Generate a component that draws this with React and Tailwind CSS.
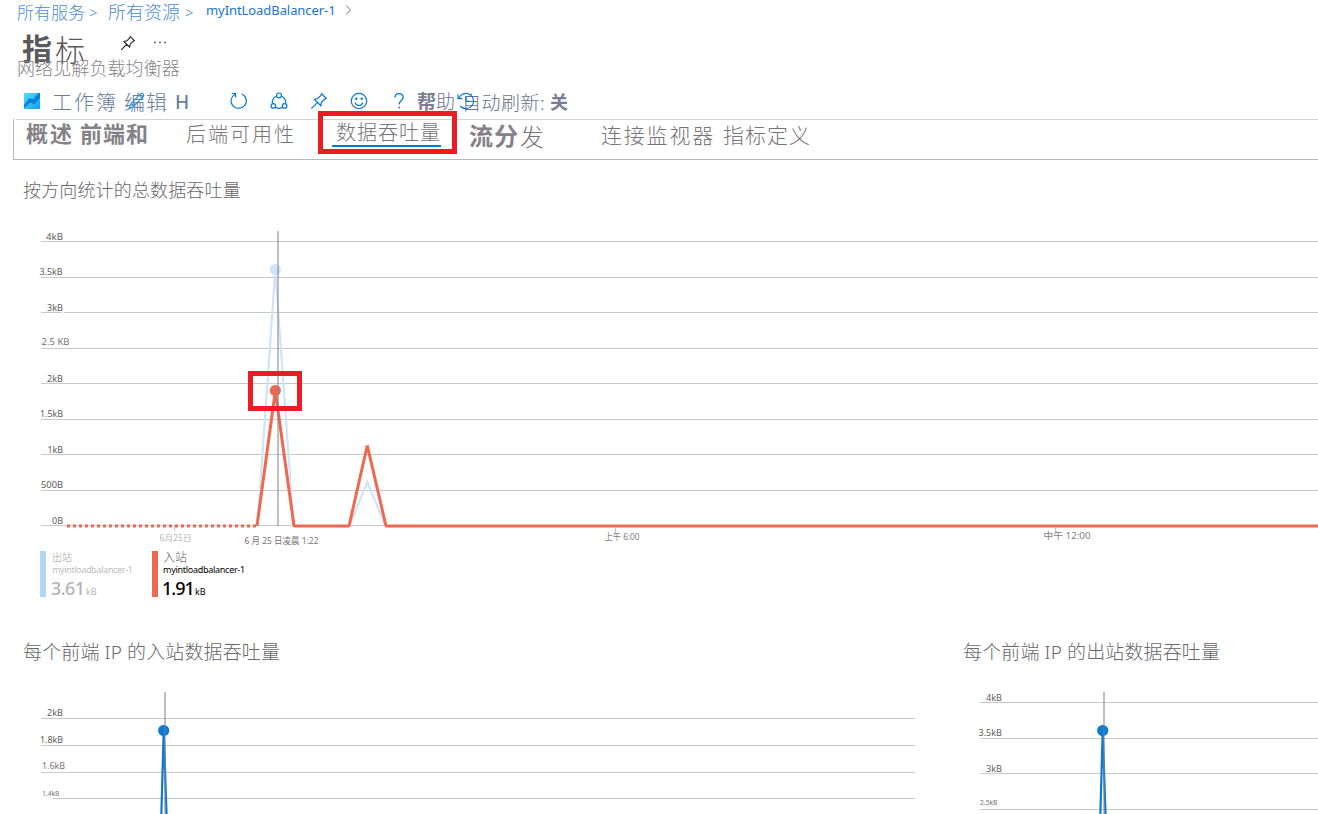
const FONT = "font-['Noto_Sans','Noto_Sans_CJK_SC',sans-serif]";

function Label({ x, y, w, size = 9, fill = '#5c5a5e', children }) {
  return (
    <text x={x} y={y} fontSize={size} fill={fill} textLength={w} lengthAdjust="spacingAndGlyphs">
      {children}
    </text>
  );
}

function Pin({ className }) {
  return (
    <svg viewBox="0 0 16 16" className={className} fill="none" stroke="currentColor" strokeWidth="1.1">
      <path d="M10.3 1.6 14.4 5.7 13 6.4 10.2 9.2 9.6 12.2 3.9 6.5 6.9 5.8 9.7 3ZM6.6 9.4 1.2 14.8" />
    </svg>
  );
}

function Chevron() {
  return (
    <svg viewBox="0 0 7 12" className="h-3 w-[7px]" fill="none" stroke="#767676" strokeWidth="1">
      <path d="M1 1.5 5.5 6 1 10.5" />
    </svg>
  );
}

function Breadcrumb() {
  return (
    <nav className="flex h-6 items-start whitespace-nowrap pl-[17px] font-light text-[#4a8ccb]">
      <span className="w-[72px] text-[17px] leading-[25px]">所有服务</span>
      <span className="w-[19px] text-[15px] leading-[25px]">&gt;</span>
      <span className="w-[77px] text-[18px] leading-[25px]">所有资源</span>
      <span className="w-[21px] text-[15px] leading-[25px]">&gt;</span>
      <span className="w-[139px] text-[13px] font-normal leading-[21px] tracking-[-0.07px] text-[#1874cd]">myIntLoadBalancer-1</span>
      <span className="pt-1"><Chevron /></span>
    </nav>
  );
}

function Title() {
  return (
    <header className="h-[61px] whitespace-nowrap">
      <div className="flex h-[34px] items-start pl-[22px] text-[#5b595c]">
        <span className="w-[33px] text-[30px] font-bold leading-[49px]">指</span>
        <span className="w-[65px] text-[30px] font-light leading-[52px]">标</span>
        <Pin className="mt-[11px] size-4 text-[#222]" />
        <svg viewBox="0 0 12 3" className="ml-[18px] mt-[17px] h-[3px] w-3" fill="#555">
          <circle cx="1" cy="1.5" r="0.9" /><circle cx="6" cy="1.5" r="0.9" /><circle cx="11" cy="1.5" r="0.9" />
        </svg>
      </div>
      <p className="pl-[17px] text-[18px] font-light leading-[20px] tracking-[0.1px] text-[#858287]">网络见解负载均衡器</p>
    </header>
  );
}

function Toolbar() {
  return (
    <div className="flex h-[34px] items-start whitespace-nowrap pl-6 text-[#6b7f9e]">
      <svg viewBox="0 0 16 16" className="mt-2 size-4">
        <defs>
          <linearGradient id="wb" x1="0" y1="0" x2="1" y2="1">
            <stop stopColor="#4fe0fc" /><stop offset="1" stopColor="#12a0ee" />
          </linearGradient>
        </defs>
        <rect width="16" height="16" rx="0.6" fill="url(#wb)" />
        <path d="M0 12 5.5 5 9 6.5 14.5 0H16V5L10 11.5 6.5 9.5 0 15Z" fill="#0b7fdc" />
      </svg>
      <span className="ml-[12px] w-[72px] text-[20px] font-light leading-[35px] tracking-[2px]">工作簿</span>
      <span className="relative w-[51px] text-[21px] font-light leading-[35px] tracking-[1px]">
        编辑
        <svg viewBox="0 0 18 18" className="absolute left-[4px] top-[7px] size-[18px]" fill="none" stroke="#2c8fdd" strokeWidth="1.1">
          <path d="M12.8 1.5q2-.6 2.7.7t-.4 2.4L5.8 14.2 1 16.5l2-5ZM11.5 3.2l3 2.8M3 11.5l2.8 2.7" />
        </svg>
      </span>
      <span className="w-[55px] text-[19px] font-medium leading-[34px]">H</span>
      <div className="mt-[7px] flex gap-[22px] text-[#0a78d4]">
        <svg viewBox="0 0 18 18" className="size-[18px]" fill="none" stroke="currentColor" strokeWidth="1.2">
          <path d="M5 2.2A7.6 7.6 0 1 0 12 2M1.7 1.5H5.6V5.4" />
        </svg>
        <svg viewBox="0 0 18 18" className="size-[18px]" fill="none" stroke="currentColor" strokeWidth="1.2">
          <circle cx="9" cy="3.4" r="2.4" /><circle cx="3.4" cy="13.9" r="2.3" /><circle cx="14.6" cy="13.9" r="2.3" />
          <path d="M6.7 4C3.5 5.2 2.2 8 2.3 11.6M11.3 4c3.2 1.2 4.5 4 4.4 7.6M5.5 15.2c2.2 1.4 4.8 1.4 7 0" />
        </svg>
        <Pin className="size-[18px]" />
        <svg viewBox="0 0 18 18" className="size-[18px]" fill="none" stroke="currentColor" strokeWidth="1.2">
          <circle cx="9" cy="9" r="7.7" /><path d="M5 10.5c1.6 4 6.4 4 8 0" />
          <circle cx="6.3" cy="6.8" r="0.6" fill="currentColor" /><circle cx="11.7" cy="6.8" r="0.6" fill="currentColor" />
        </svg>
        <svg viewBox="0 0 18 18" className="size-[18px]" fill="none" stroke="currentColor" strokeWidth="1.3">
          <path d="M5 5.4C5 .3 13.2.3 13.2 5.2c0 3.2-4.1 3.4-4.1 7.2M9.1 14.6v1.8" />
        </svg>
      </div>
      <span className="ml-[9px] text-[19px] font-bold leading-[35px] text-[#7a7f96]">帮</span>
      <span className="relative w-[26px] text-[19px] font-light leading-[35px] text-[#6d7289]">
        助
        <svg viewBox="0 0 18 18" className="absolute left-[21px] top-[7px] size-[18px]" fill="none" stroke="#0a78d4" strokeWidth="1.2">
          <path d="M1.8 6.5A7.6 7.6 0 1 1 3.2 14M1 2.2V6.6H5.4M9 4.5V9.3H13" />
        </svg>
      </span>
      <span className="w-[88px] text-[19px] font-light leading-[36px] tracking-[0.5px] text-[#6d7289]">自动刷新:</span>
      <span className="text-[18px] font-bold leading-[34px] text-[#7a7f96]">关</span>
    </div>
  );
}

function Tabs() {
  return (
    <div className="ml-[13px] h-[41px] border-b border-l border-[#b9b9b9] text-[#77747a]">
      <div className="ml-0.5 flex h-10 items-start whitespace-nowrap border-t border-[#d2d2d2] pl-2.5">
        <span className="w-[54px] text-[22px] font-bold leading-[27px] tracking-[2px] text-[#858287]">概述</span>
        <span className="w-[106px] text-[22px] font-bold leading-[27px] tracking-[1px] text-[#858287]">前端和</span>
        <span className="w-[132px] text-[20px] font-light leading-[29px] tracking-[2px]">后端可用性</span>
        <div className="-mt-[9px] h-[43px] w-[139px] border-[5px] border-[#ed1c24] px-[9px]">
          <div className="h-[31px] w-[109px] border-b-2 border-[#0a78d4] pl-1 text-[20px] font-light leading-[33px] tracking-[1px]">数据吞吐量</div>
        </div>
        <span className="ml-3 w-[51px] text-[24px] font-bold leading-[31px] tracking-[1px] text-[#858287]">流分</span>
        <span className="w-[81px] text-[24px] font-light leading-[34px]">发</span>
        <span className="w-[122px] text-[21px] font-light leading-[30px] tracking-[1.8px]">连接监视器</span>
        <span className="text-[21px] font-light leading-[30px] tracking-[1px]">指标定义</span>
      </div>
    </div>
  );
}

const mainTicks = [
  { t: '4kB', x: 46, w: 17, y: 241 },
  { t: '3.5kB', x: 39.5, w: 23, y: 277, dy: -1 },
  { t: '3kB', x: 47, w: 16, y: 312 },
  { t: '2.5 KB', x: 41.5, w: 28, y: 348, dy: -2, fill: '#77747a' },
  { t: '2kB', x: 47, w: 16, y: 383 },
  { t: '1.5kB', x: 40, w: 23, y: 419, dy: -1 },
  { t: '1kB', x: 47.5, w: 15.5, y: 454 },
  { t: '500B', x: 41, w: 22, y: 490, dy: -1 },
  { t: '0B', x: 52, w: 11, y: 525 },
];

function Grid({ ticks, x1, x2 }) {
  return ticks.map((k) => (
    <g key={k.t}>
      <path d={`M${k.start ?? x1} ${k.y + 0.5}H${x2}`} stroke="#c8c8c8" />
      <Label x={k.x} y={k.y - 1 + (k.dy ?? 0)} w={k.w} size={k.size} fill={k.fill}>{k.t}</Label>
    </g>
  ));
}

function MainChart() {
  return (
    <svg viewBox="0 220 1318 330" className="block h-[330px] w-[1318px]">
      <Grid ticks={mainTicks} x1={41} x2={1318} />
      <path d="M62 312.5H64" stroke="#fff" />
      <path d="M174.5 526V531M615.5 528V532M1055.5 528V531" stroke="#c0c0c0" />
      <path d="M257.5 525 275.3 270 293.5 525M350 525 367.3 482 385 525" fill="none" stroke="#cfe5f7" strokeWidth="2.2" />
      <circle cx="275.3" cy="269.5" r="5.6" fill="#cfe5f7" />
      <path d="M67 526H257" stroke="#ee6950" strokeWidth="3" strokeDasharray="3 3" />
      <path d="M257 525.8 275.3 391 294 526H349L367.3 445.5 386 526H1318" fill="none" stroke="#ee6950" strokeWidth="3" strokeLinejoin="bevel" />
      <circle cx="275.3" cy="390.5" r="5.6" fill="#ee6950" />
      <path d="M278 231V526" stroke="#808080" strokeOpacity="0.5" strokeWidth="2" />
      <rect x="250.5" y="373.5" width="49" height="35" fill="none" stroke="#ed1c24" strokeWidth="5" />
      <Label x={159.5} y={541} w={32} size={8} fill="#b8b6ba">6月25日</Label>
      <Label x={244.5} y={544} w={74} size={9} fill="#77747a">6 月 25 日凌晨 1:22</Label>
      <Label x={604.5} y={540} w={35} size={9} fill="#807d84">上午 6:00</Label>
      <Label x={1043.5} y={539} w={47} size={9} fill="#807d84">中午 12:00</Label>
    </svg>
  );
}

function Legend() {
  return (
    <div className="flex h-[92px] items-start whitespace-nowrap pl-10 pt-px">
      <div className="flex h-[46px] w-28 border-l-[6px] border-[#b3d6f2] pl-[6px]">
        <div>
          <div className="h-3 text-[10px] font-light leading-[12px] text-[#999]">出站</div>
          <div className="h-3 text-[9px] leading-[13px] tracking-[-0.35px] text-[#bdbdbd]">myintloadbalancer-1</div>
          <div className="flex items-baseline text-[#b5b5b5]">
            <span className="-ml-px w-[35px] text-[18px] font-medium leading-[26px] tracking-[-0.6px]">3.61</span>
            <span className="text-[9px]">kB</span>
          </div>
        </div>
      </div>
      <div className="flex h-[46px] border-l-[6px] border-[#ee6950] pl-[5px]">
        <div>
          <div className="h-3 text-[12px] font-light leading-[13px] text-[#5d5560]">入站</div>
          <div className="h-3 text-[9px] leading-[13px] tracking-[-0.28px] text-black">myintloadbalancer-1</div>
          <div className="flex items-baseline text-black">
            <span className="-ml-px w-[33px] text-[18px] font-medium leading-[26px] tracking-[-1px]">1.91</span>
            <span className="text-[9px]">kB</span>
          </div>
        </div>
      </div>
    </div>
  );
}

const inTicks = [
  { t: '2kB', x: 47, w: 16, y: 718, dy: -1 },
  { t: '1.8kB', x: 40, w: 23, y: 745, dy: -1 },
  { t: '1.6kB', x: 42, w: 23, y: 772, dy: -2, fill: '#77747a' },
  { t: '1.4kB', x: 42, w: 17.5, y: 798, dy: -1, size: 7.5, fill: '#77747a', start: 53 },
];
const outTicks = [
  { t: '4kB', x: 46, w: 16, y: 702 },
  { t: '3.5kB', x: 38.5, w: 23.5, y: 738, dy: -1 },
  { t: '3kB', x: 46, w: 16, y: 773 },
  { t: '2.5kB', x: 40, w: 17.5, y: 809, dy: -3, size: 7, fill: '#77747a' },
];

function FrontendChart({ title, ticks, width, end, px }) {
  return (
    <section className="flex-none">
      <h2 className="h-[42px] whitespace-nowrap pl-[23px] text-[19px] font-light leading-[20px] tracking-[0.13px] text-[#6a676d]">{title}</h2>
      <svg viewBox={`0 684 ${width} 130`} width={width} height="130" className="block">
        <Grid ticks={ticks} x1={px.gridStart} x2={end} />
        <path d={`M${px.cx - 2.4} 816 ${px.cx} 731 ${px.cx + 2.9} 816`} fill="none" stroke="#0a7ad6" strokeWidth="2.2" />
        <circle cx={px.cx} cy="730.5" r="5.6" fill="#0a7ad6" />
        <path d={`M${px.cx + 1.3} 692V814`} stroke="#808080" strokeOpacity="0.5" strokeWidth="2" />
      </svg>
    </section>
  );
}

export default function App() {
  return (
    <main className={`h-[814px] w-[1318px] overflow-hidden bg-white ${FONT}`}>
      <Breadcrumb />
      <Title />
      <Toolbar />
      <Tabs />
      <h2 className="h-[60px] whitespace-nowrap pl-[23px] pt-5 text-[18px] font-light leading-[20px] tracking-[0.15px] text-[#6a676d]">按方向统计的总数据吞吐量</h2>
      <MainChart />
      <Legend />
      <div className="flex">
        <FrontendChart title="每个前端 IP 的入站数据吞吐量" ticks={inTicks} width={940} end={915} px={{ cx: 163.7, gridStart: 41 }} />
        <FrontendChart title="每个前端 IP 的出站数据吞吐量" ticks={outTicks} width={378} end={378} px={{ cx: 162.7, gridStart: 40 }} />
      </div>
    </main>
  );
}
